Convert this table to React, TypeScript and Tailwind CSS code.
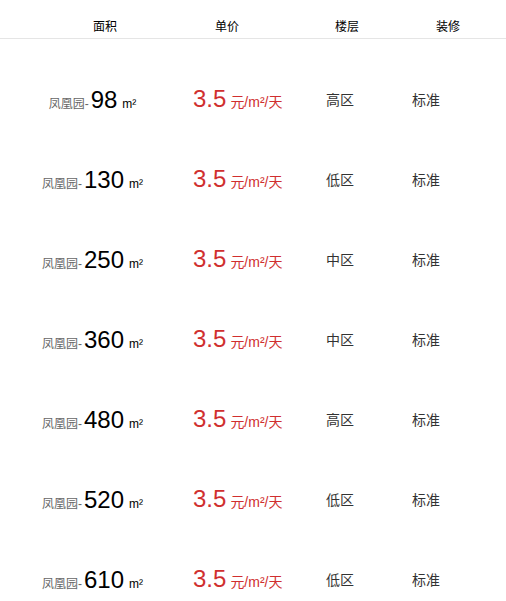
import React from 'react';

interface RowProps {
  area: number;
  floor: string;
}

const rows: RowProps[] = [
  { area: 98, floor: '高区' },
  { area: 130, floor: '低区' },
  { area: 250, floor: '中区' },
  { area: 360, floor: '中区' },
  { area: 480, floor: '高区' },
  { area: 520, floor: '低区' },
  { area: 610, floor: '低区' },
];

const font = { fontFamily: '"Liberation Sans", "Noto Sans CJK SC", sans-serif' };

const Row: React.FC<RowProps> = ({ area, floor }) => (
  <div className="flex h-20 items-center">
    <div className="flex w-[185px] items-baseline justify-center">
      <span className="text-[12px] text-[#666]">凤凰园-</span>
      <span className="ml-[2px] text-[24px] leading-none text-black">{area}</span>
      <span className="ml-[5px] text-[12px] text-black">m²</span>
    </div>
    <div className="flex w-[141px] items-baseline pl-2 text-[#d02f2f]">
      <span className="text-[24px] leading-none">3.5</span>
      <span className="ml-[4px] text-[14px]">元/m²/天</span>
    </div>
    <div className="w-[86px] text-[14px] text-[#333]">{floor}</div>
    <div className="text-[14px] text-[#333]">标准</div>
  </div>
);

export default function App() {
  return (
    <div className="h-[601px] w-[506px] overflow-hidden bg-white" style={font}>
      <div className="flex h-[39px] items-end border-b border-[#e5e5e5] pb-[2px] pl-[44px] text-[12px] text-black">
        <div className="w-[122px] text-center">面积</div>
        <div className="w-[122px] text-center">单价</div>
        <div className="w-[118px] text-center">楼层</div>
        <div className="w-[84px] text-center">装修</div>
      </div>
      <div className="pt-[21px]">
        {rows.map((r, i) => (
          <Row key={i} {...r} />
        ))}
      </div>
    </div>
  );
}
